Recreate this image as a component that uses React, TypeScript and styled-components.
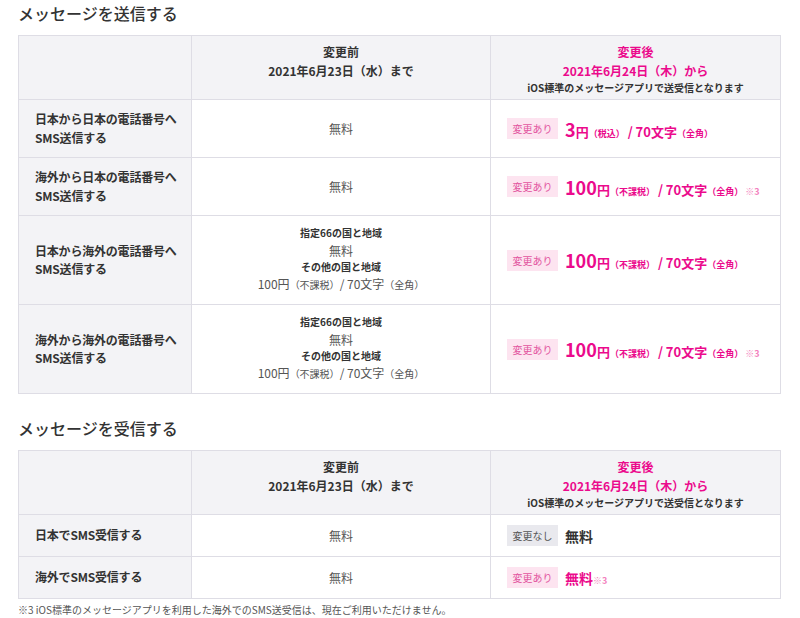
import styled, { createGlobalStyle } from 'styled-components';

const PINK = '#eb0a8c';
const BORDER = '#dedde5';

const GlobalStyle = createGlobalStyle`
  html, body {
    margin: 0;
    padding: 0;
    background: #fff;
  }
  body {
    font-family: "Noto Sans CJK JP", "Noto Sans", sans-serif;
    color: #333;
  }
`;

const Page = styled.div`
  padding: 1px 19px 0 18px;
  width: 763px;
`;

const Heading = styled.h2<{ $top?: number }>`
  margin: ${(p) => p.$top ?? 0}px 0 10px;
  font-size: 16px;
  line-height: 24px;
  font-weight: 500;
  color: #333;
`;

const Table = styled.table`
  width: 763px;
  border-collapse: collapse;
  table-layout: fixed;
  border: 1px solid ${BORDER};
  font-size: 12px;
`;

const Th = styled.th<{ $after?: boolean }>`
  background: #f3f3f6;
  border: 1px solid ${BORDER};
  padding: 6px 8px 3px;
  vertical-align: top;
  font-weight: 700;
  line-height: 19px;
  color: ${(p) => (p.$after ? PINK : '#333')};
  text-align: center;
`;

const SubNote = styled.div`
  font-size: 10px;
  line-height: 16px;
  color: #333;
`;

const Label = styled.th`
  background: #f3f3f6;
  border: 1px solid ${BORDER};
  padding: 10px 4px 10px 16px;
  text-align: left;
  font-weight: 700;
  line-height: 18.5px;
  color: #333;
  white-space: nowrap;
  letter-spacing: -0.2px;
`;

const Before = styled.td`
  border: 1px solid ${BORDER};
  padding: 10px 8px;
  text-align: center;
  color: #555;
  line-height: 19px;
`;

const Region = styled.div`
  font-size: 10px;
  font-weight: 700;
  line-height: 14.5px;
  color: #333;
`;

const Small = styled.span`
  font-size: 10px;
`;

const After = styled.td`
  border: 1px solid ${BORDER};
  padding: 10px 16px;
`;

const Line = styled.div`
  display: flex;
  align-items: center;
  gap: 7px;
`;

const Badge = styled.span<{ $changed?: boolean }>`
  display: inline-flex;
  align-items: center;
  justify-content: center;
  width: 51px;
  height: 21px;
  font-size: 10px;
  color: ${(p) => (p.$changed ? '#e2559f' : '#555')};
  background: ${(p) => (p.$changed ? '#fde4f0' : '#e9e9ee')};
  flex-shrink: 0;
`;

const Price = styled.span<{ $pink?: boolean; $size?: number }>`
  font-weight: 700;
  font-size: ${(p) => p.$size ?? 13}px;
  color: ${(p) => (p.$pink ? PINK : '#333')};
  white-space: nowrap;
`;

const Big = styled.span`
  font-size: 18px;
`;

const Paren = styled.span`
  font-size: 9px;
`;

const Note = styled.span<{ $gap?: number }>`
  font-size: 9px;
  color: #f37fbd;
  margin-left: ${(p) => p.$gap ?? 2}px;
`;

const Footnote = styled.p`
  margin: 4px 0 0;
  font-size: 10px;
  line-height: 14px;
  color: #555;
`;

const Row = styled.tr``;

const Header = () => (
  <thead>
    <tr>
      <Th />
      <Th>
        変更前
        <br />
        2021年6月23日（水）まで
      </Th>
      <Th $after>
        変更後
        <br />
        2021年6月24日（木）から
        <SubNote>iOS標準のメッセージアプリで送受信となります</SubNote>
      </Th>
    </tr>
  </thead>
);

const PinkPrice = ({ num, tax, note }: { num: string; tax: string; note?: boolean }) => (
  <Line>
    <Badge $changed>変更あり</Badge>
    <Price $pink>
      <Big>{num}</Big>円<Paren>（{tax}）</Paren> / 70文字<Paren>（全角）</Paren>
      {note && <Note>※3</Note>}
    </Price>
  </Line>
);

const Overseas = () => (
  <>
    <Region>指定66の国と地域</Region>
    <div>無料</div>
    <Region>その他の国と地域</Region>
    <div>
      100円<Small>（不課税）</Small>/ 70文字<Small>（全角）</Small>
    </div>
  </>
);

const colgroup = (
  <colgroup>
    <col style={{ width: 173 }} />
    <col style={{ width: 299 }} />
    <col />
  </colgroup>
);

export default function App() {
  return (
    <>
      <GlobalStyle />
      <Page>
        <Heading>メッセージを送信する</Heading>
        <Table>
          {colgroup}
          <Header />
          <tbody>
            <Row>
              <Label>
                日本から日本の電話番号へ
                <br />
                SMS送信する
              </Label>
              <Before>無料</Before>
              <After>
                <PinkPrice num="3" tax="税込" />
              </After>
            </Row>
            <Row>
              <Label>
                海外から日本の電話番号へ
                <br />
                SMS送信する
              </Label>
              <Before>無料</Before>
              <After>
                <PinkPrice num="100" tax="不課税" note />
              </After>
            </Row>
            <Row>
              <Label>
                日本から海外の電話番号へ
                <br />
                SMS送信する
              </Label>
              <Before>
                <Overseas />
              </Before>
              <After>
                <PinkPrice num="100" tax="不課税" />
              </After>
            </Row>
            <Row>
              <Label>
                海外から海外の電話番号へ
                <br />
                SMS送信する
              </Label>
              <Before>
                <Overseas />
              </Before>
              <After>
                <PinkPrice num="100" tax="不課税" note />
              </After>
            </Row>
          </tbody>
        </Table>

        <Heading $top={22}>メッセージを受信する</Heading>
        <Table>
          {colgroup}
          <Header />
          <tbody>
            <Row>
              <Label>日本でSMS受信する</Label>
              <Before>無料</Before>
              <After>
                <Line>
                  <Badge>変更なし</Badge>
                  <Price $size={14}>無料</Price>
                </Line>
              </After>
            </Row>
            <Row>
              <Label>海外でSMS受信する</Label>
              <Before>無料</Before>
              <After>
                <Line>
                  <Badge $changed>変更あり</Badge>
                  <Price $pink $size={14}>
                    無料<Note $gap={0}>※3</Note>
                  </Price>
                </Line>
              </After>
            </Row>
          </tbody>
        </Table>
        <Footnote>※3 iOS標準のメッセージアプリを利用した海外でのSMS送受信は、現在ご利用いただけません。</Footnote>
      </Page>
    </>
  );
}
